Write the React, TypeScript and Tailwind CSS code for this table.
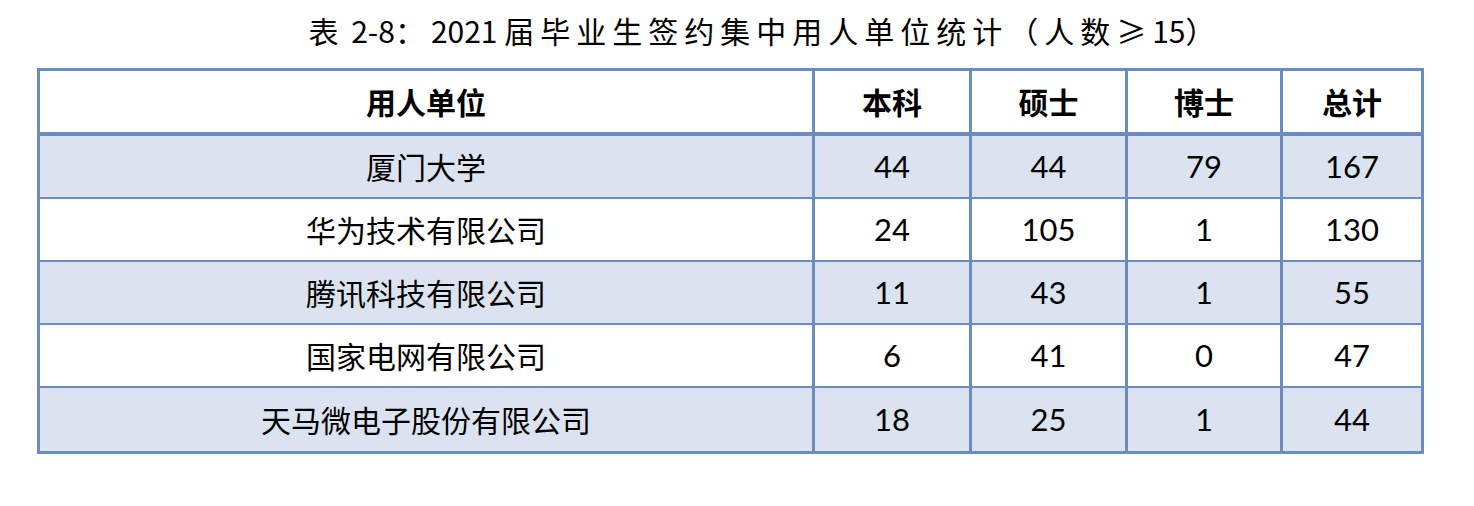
import React from 'react';

const rows = [
  { name: '厦门大学', bk: 44, ss: 44, bs: 79, total: 167 },
  { name: '华为技术有限公司', bk: 24, ss: 105, bs: 1, total: 130 },
  { name: '腾讯科技有限公司', bk: 11, ss: 43, bs: 1, total: 55 },
  { name: '国家电网有限公司', bk: 6, ss: 41, bs: 0, total: 47 },
  { name: '天马微电子股份有限公司', bk: 18, ss: 25, bs: 1, total: 44 },
];

const cjk = "font-['Noto_Sans_CJK_SC',sans-serif]";
const num = "font-['Lato','Noto_Sans_CJK_SC',sans-serif]";

export default function App() {
  return (
    <div className="w-[1474px] h-[506px] bg-white text-black">
      {/* title */}
      <div className="pt-[12px] mb-[20px] flex justify-center pl-[56px]">
        <h1 className={`${cjk} text-[30px] leading-[36px] tracking-[6px] font-normal`}>
          表<span className="tracking-normal"> 2-8</span>：<span className="tracking-normal">2021 </span>届毕业生签约集中用人单位统计（人数≥<span className="tracking-normal">15</span>）
        </h1>
      </div>

      <div className="ml-[37px] w-[1387px] border-[3px] border-[#6a8cc0]">
        {/* header */}
        <div className="flex h-[65px] border-b-4 border-[#6a8cc0] font-bold text-[30px]">
          <div className={`${cjk} w-[775px] border-r-[3px] border-[#6a8cc0] flex items-center justify-center`}>用人单位</div>
          <div className={`${cjk} w-[157px] border-r-[3px] border-[#6a8cc0] flex items-center justify-center`}>本科</div>
          <div className={`${cjk} w-[156px] border-r-[3px] border-[#6a8cc0] flex items-center justify-center`}>硕士</div>
          <div className={`${cjk} w-[155px] border-r-[3px] border-[#6a8cc0] flex items-center justify-center`}>博士</div>
          <div className={`${cjk} flex-1 flex items-center justify-center`}>总计</div>
        </div>

        {rows.map((r, i) => (
          <div
            key={r.name}
            className={`flex h-[63px] text-[30px] ${i < rows.length - 1 ? 'border-b-2' : ''} border-[#6a8cc0] ${i % 2 === 0 ? 'bg-[#dce3f0]' : 'bg-white'}`}
          >
            <div className={`${cjk} w-[775px] border-r-[3px] border-[#6a8cc0] flex items-center justify-center`}>{r.name}</div>
            <div className={`${num} w-[157px] border-r-[3px] border-[#6a8cc0] flex items-center justify-center text-[31px]`}>{r.bk}</div>
            <div className={`${num} w-[156px] border-r-[3px] border-[#6a8cc0] flex items-center justify-center text-[31px]`}>{r.ss}</div>
            <div className={`${num} w-[155px] border-r-[3px] border-[#6a8cc0] flex items-center justify-center text-[31px]`}>{r.bs}</div>
            <div className={`${num} flex-1 flex items-center justify-center text-[31px]`}>{r.total}</div>
          </div>
        ))}
      </div>
    </div>
  );
}
